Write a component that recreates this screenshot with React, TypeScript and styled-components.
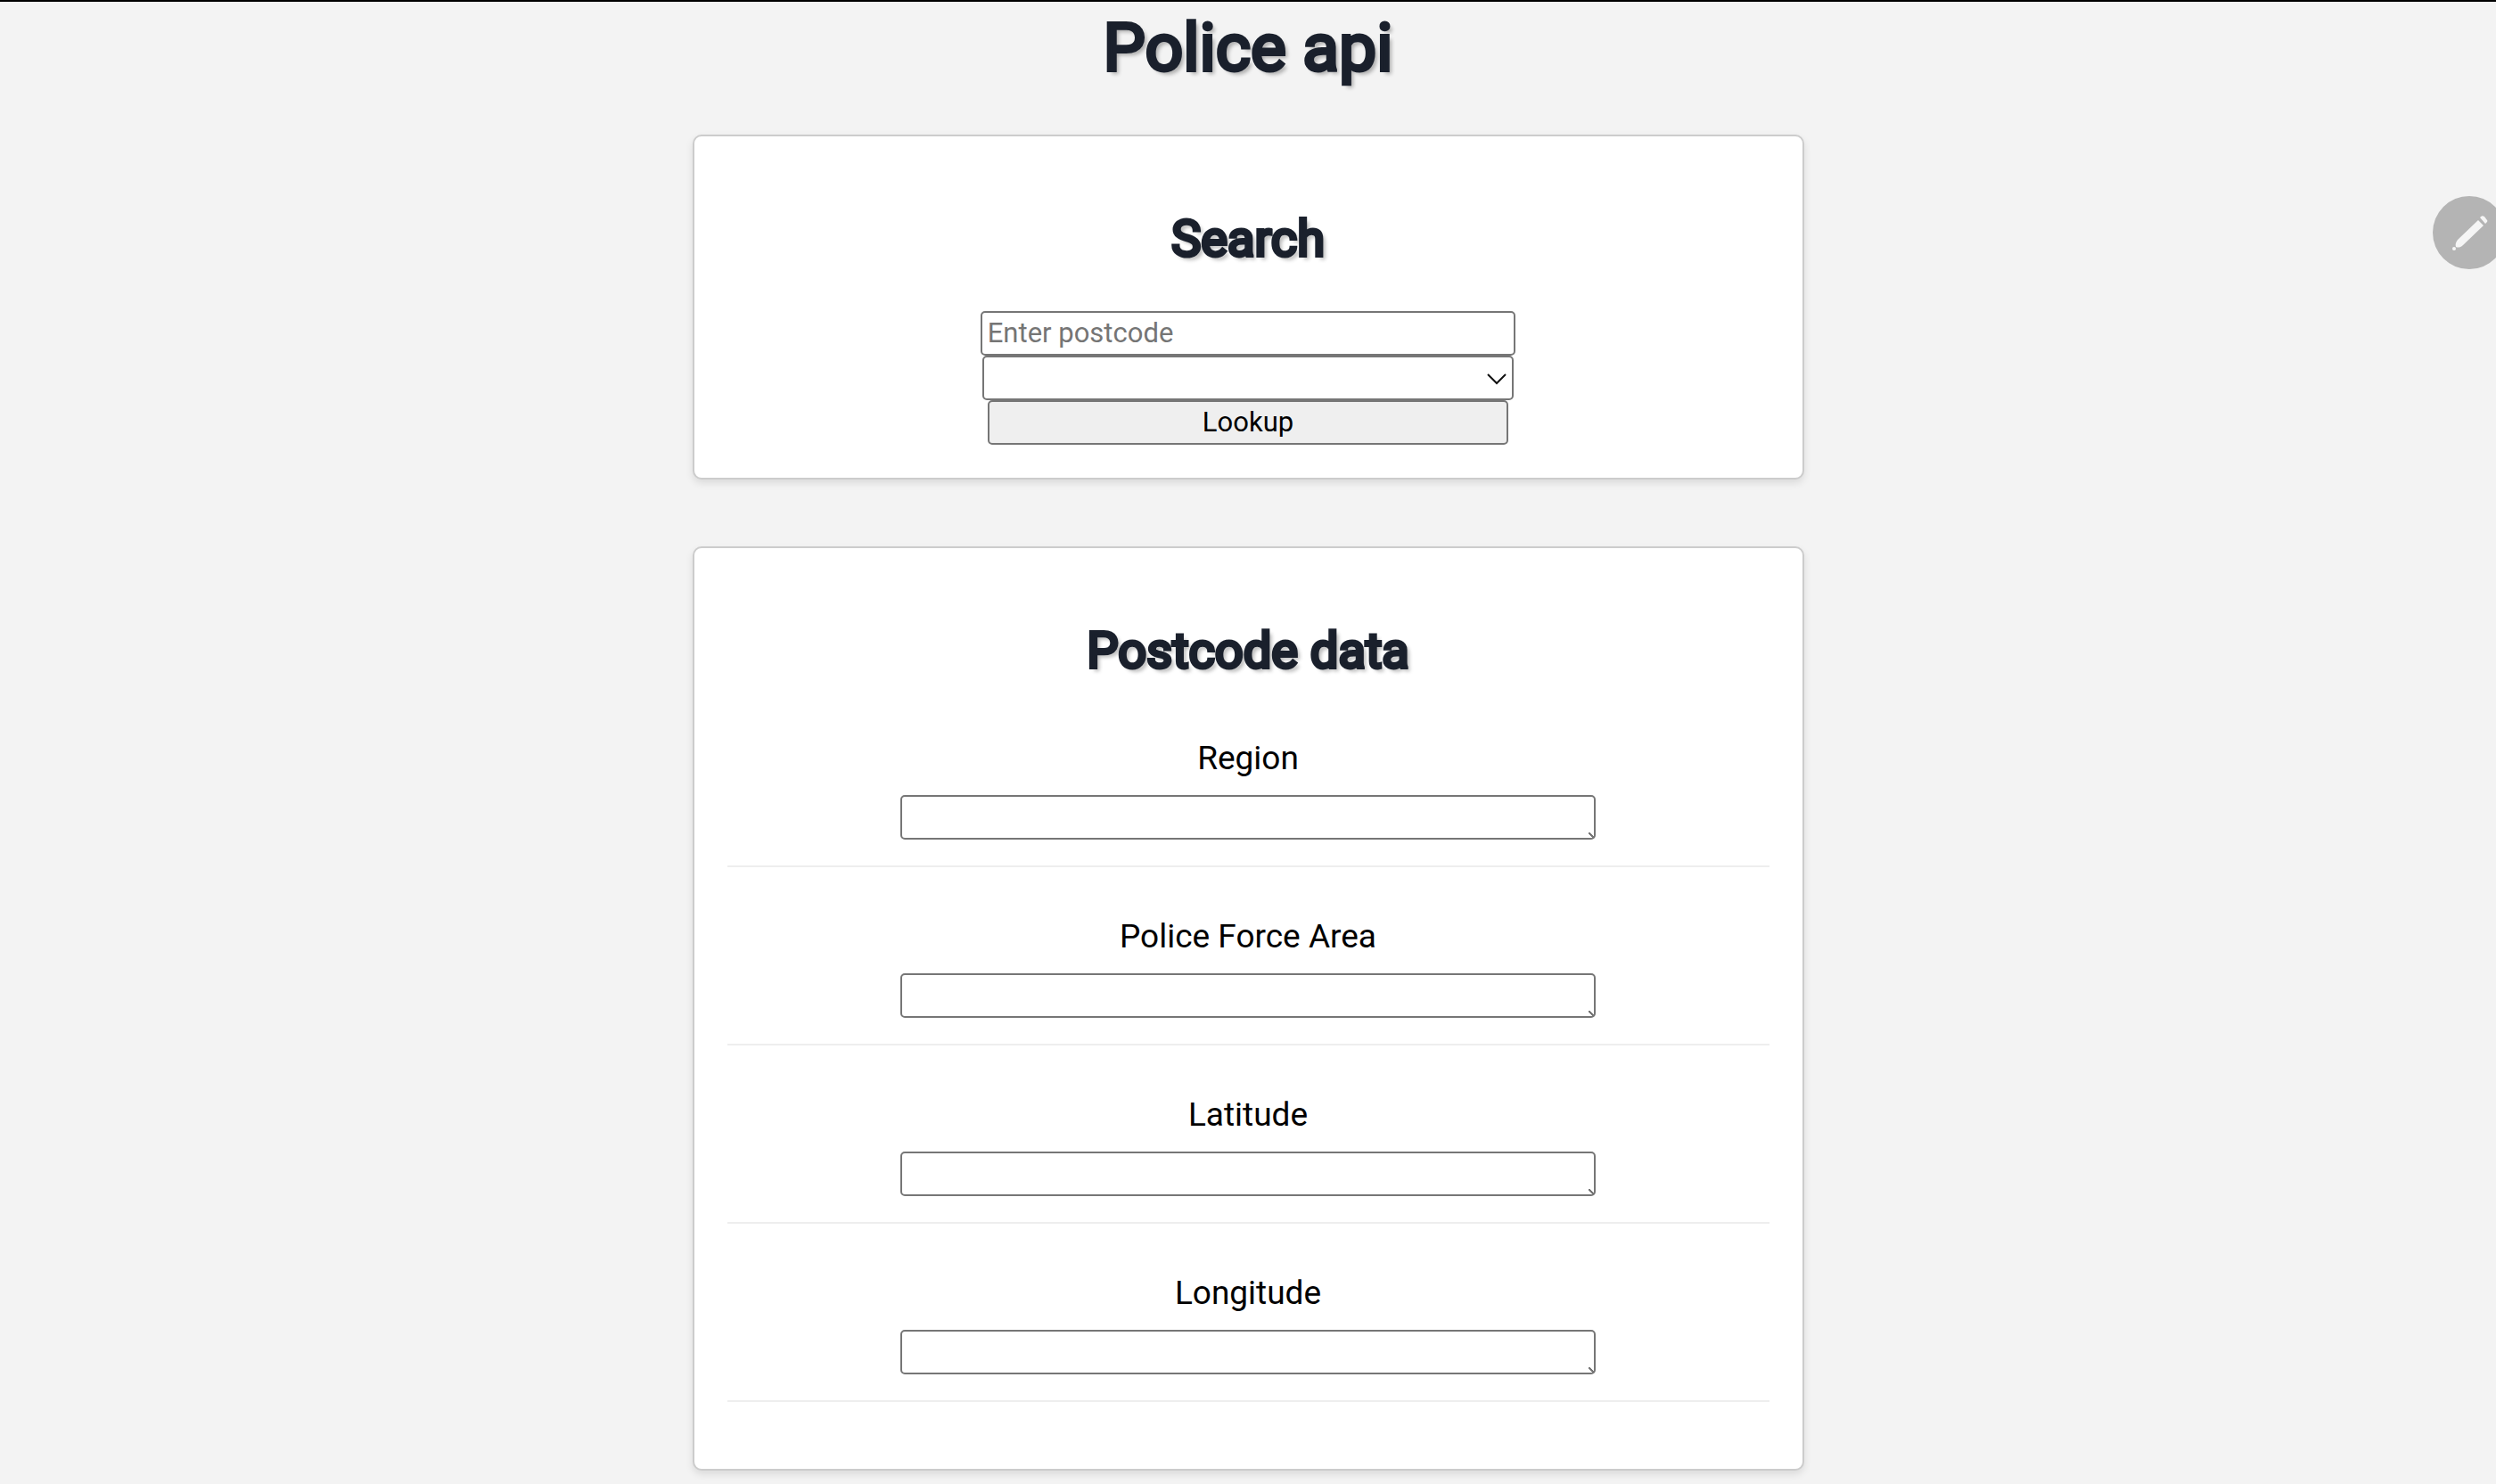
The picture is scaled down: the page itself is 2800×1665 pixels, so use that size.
import React from 'react';
import styled, { createGlobalStyle, css } from 'styled-components';

const GlobalStyle = createGlobalStyle`
  body {
    margin: 0;
    background: #f3f3f3;
    border-top: 2px solid #000;
    color: #000;
    font-family: Roboto, sans-serif;
    font-size: 37px;
    overflow-x: hidden;
  }
`;

const headingStyle = css`
  color: #1a202c;
  font-weight: 400;
  text-align: center;
  text-shadow: 4px 4px 4px rgba(0, 0, 0, 0.3);
  -webkit-text-stroke: 4px #1a202c;
`;

const Page = styled.div`
  display: flex;
  flex-direction: column;
  align-items: center;
  padding-top: 6px;
`;

const PageTitle = styled.h1`
  ${headingStyle}
  margin: 0 0 53px;
  font-size: 75px;
  line-height: 90px;
`;

const Main = styled.main`
  display: flex;
  flex-direction: column;
  gap: 75px;
  width: 100%;
  max-width: 1247px;
  padding-bottom: 75px;
`;

const Card = styled.section`
  box-sizing: border-box;
  padding: 37px;
  background: #fff;
  border: 2px solid #ccc;
  border-radius: 10px;
  box-shadow: 0 4px 8px rgba(0, 0, 0, 0.1);
`;

const CardTitle = styled.h2`
  ${headingStyle}
  margin: 44px 0 47px;
  font-size: 56px;
  line-height: 68px;
`;

const SearchForm = styled.form`
  display: flex;
  flex-direction: column;
  align-items: center;
`;

const PostcodeInput = styled.input`
  width: 50%;
  height: 44px;
  padding: 0 6px 2px;
  background: #fff;
  border: 2px solid #767676;
  border-radius: 5px;
  font: 31px Roboto, sans-serif;

  &::placeholder {
    color: #757575;
  }
`;

const SelectWrap = styled.div`
  position: relative;
  display: flex;
  width: 51%;
  height: 50px;
`;

const Select = styled.select`
  width: 100%;
  padding: 0 40px 0 6px;
  appearance: none;
  background: #fff;
  border: 2px solid #767676;
  border-radius: 5px;
  color: #000;
  font: 31px Roboto, sans-serif;
`;

const Chevron = styled.svg`
  position: absolute;
  top: 19px;
  right: 8px;
  width: 22px;
  height: 14px;
  pointer-events: none;
`;

const LookupButton = styled.button`
  width: 50%;
  height: 50px;
  padding: 0 0 2px;
  background: #efefef;
  border: 2px solid #767676;
  border-radius: 5px;
  color: #000;
  font: 31px Roboto, sans-serif;
`;

const Field = styled.div`
  display: flex;
  flex-direction: column;
  align-items: center;
  gap: 20px;
  margin-bottom: 38px;
  padding: 19px 0 29px;
  border-bottom: 2px solid #eee;
`;

const FieldLabel = styled.label`
  line-height: 42px;
`;

const FieldValue = styled.textarea`
  box-sizing: border-box;
  width: 780px;
  max-width: 100%;
  height: 50px;
  padding: 4px;
  background: #fff;
  border: 2px solid #767676;
  border-radius: 5px;
  font: 31px Roboto, sans-serif;

  &::-webkit-resizer {
    background: linear-gradient(45deg, transparent 38%, #767676 38%, #767676 62%, transparent 62%)
      right bottom / 6px 6px no-repeat;
  }
`;

const EditButton = styled.button`
  position: fixed;
  top: 220px;
  right: -11px;
  display: flex;
  align-items: center;
  justify-content: center;
  width: 82px;
  height: 82px;
  padding: 0;
  background: #b4b4b4;
  border: 0;
  border-radius: 50%;
`;

const fields = [
  { id: 'region', label: 'Region' },
  { id: 'police-force', label: 'Police Force Area' },
  { id: 'latitude', label: 'Latitude' },
  { id: 'longitude', label: 'Longitude' },
];

export default function App() {
  return (
    <>
      <GlobalStyle />
      <Page>
        <PageTitle>Police api</PageTitle>
        <Main>
          <Card>
            <CardTitle>Search</CardTitle>
            <SearchForm onSubmit={(event) => event.preventDefault()}>
              <PostcodeInput type="text" placeholder="Enter postcode" aria-label="Postcode" />
              <SelectWrap>
                <Select aria-label="Postcode matches" />
                <Chevron viewBox="0 0 22 14" fill="none" stroke="#111" strokeWidth="2" aria-hidden="true">
                  <path d="M1 2 L11 12 L21 2" />
                </Chevron>
              </SelectWrap>
              <LookupButton type="submit">Lookup</LookupButton>
            </SearchForm>
          </Card>
          <Card>
            <CardTitle>Postcode data</CardTitle>
            {fields.map((field) => (
              <Field key={field.id}>
                <FieldLabel htmlFor={field.id}>{field.label}</FieldLabel>
                <FieldValue id={field.id} rows={1} />
              </Field>
            ))}
          </Card>
        </Main>
      </Page>
      <EditButton type="button" aria-label="Edit">
        <svg width="82" height="82" viewBox="0 0 82 82" fill="#f5f5f5" aria-hidden="true">
          <path d="M51 27 L57 33 L34 55 C31 58 28 58 26 57 C25 54 26 52 28 49 Z" />
          <path d="M53 24 C55 22 56 22 58 23 L61 27 C62 28 61 29 59 31 Z" />
          <circle cx="24" cy="59" r="2" />
        </svg>
      </EditButton>
    </>
  );
}
